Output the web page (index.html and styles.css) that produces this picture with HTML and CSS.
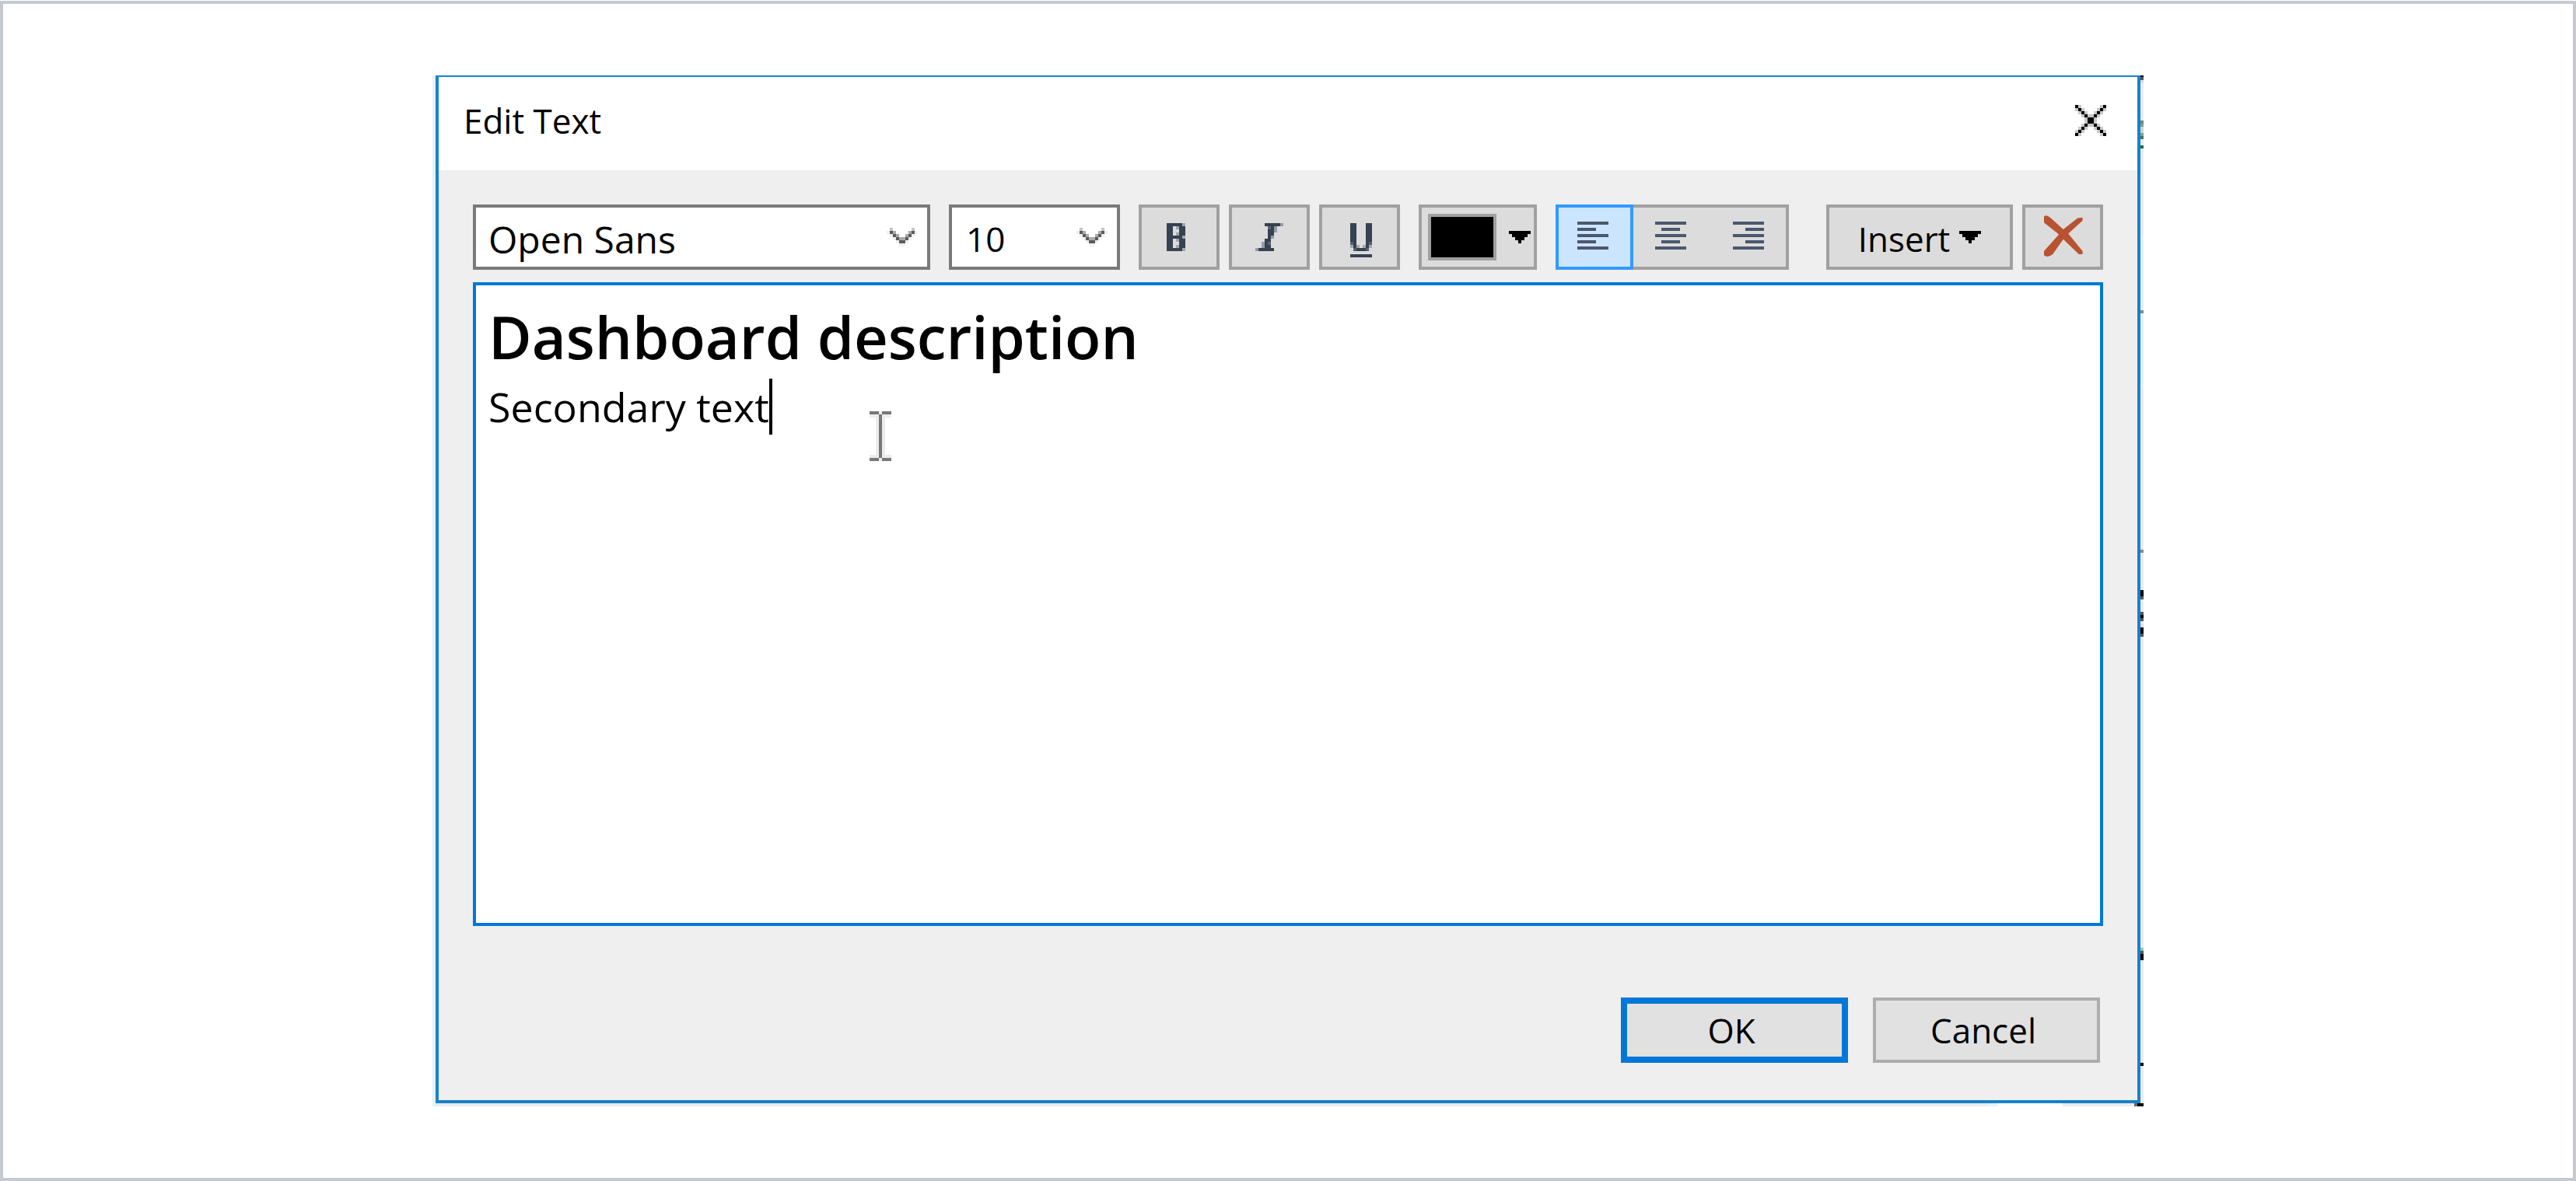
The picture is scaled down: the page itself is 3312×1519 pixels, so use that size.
FILE: index.html
```html
<!DOCTYPE html>
<html lang="en">
<head>
<meta charset="utf-8">
<title>Edit Text</title>
<link rel="stylesheet" href="styles.css">
</head>
<body>
<main class="page">
  <div class="backdrop">
    <section class="dialog" role="dialog" aria-labelledby="dialog-title">
      <header class="titlebar">
        <h1 class="title" id="dialog-title">Edit Text</h1>
        <button class="close" type="button" aria-label="Close">
          <svg width="40" height="40" viewBox="0 0 10 10" shape-rendering="crispEdges">
            <path fill="#c8c8c8" d="M0 0h2v1h-2zM8 0h2v1h-2zM0 1h3v1h-3zM7 1h3v1h-3zM1 2h3v1h-3zM6 2h3v1h-3zM2 3h6v1h-6zM3 4h4v2h-4zM2 6h6v1h-6zM1 7h3v1h-3zM6 7h3v1h-3zM0 8h3v1h-3zM7 8h3v1h-3zM0 9h2v1h-2zM8 9h2v1h-2z"/>
            <path fill="#000" d="M0 0h1v1h-1zM1 1h1v1h-1zM2 2h1v1h-1zM3 3h1v1h-1zM4 4h2v2h-2zM6 6h1v1h-1zM7 7h1v1h-1zM8 8h1v1h-1zM9 9h1v1h-1zM9 0h1v1h-1zM8 1h1v1h-1zM7 2h1v1h-1zM6 3h1v1h-1zM3 6h1v1h-1zM2 7h1v1h-1zM1 8h1v1h-1zM0 9h1v1h-1z"/>
          </svg>
        </button>
      </header>
      <div class="content">
        <div class="toolbar">
          <div class="combo combo-font">
            <select class="combo-select combo-select-font" aria-label="Font"><option>Open Sans</option></select>
            <svg class="chevron" width="40" height="24" viewBox="0 0 10 6" shape-rendering="crispEdges"><use href="#chevron"/></svg>
          </div>
          <div class="combo combo-size">
            <select class="combo-select" aria-label="Font size"><option>10</option></select>
            <svg class="chevron" width="40" height="24" viewBox="0 0 10 6" shape-rendering="crispEdges"><g id="chevron"><path fill="#c6c6c6" d="M1 0h1v1h-1zM8 0h1v1h-1z"/><path fill="#f0f0f0" d="M0 1h1v1h-1zM9 1h1v1h-1zM1 2h1v1h-1zM8 2h1v1h-1zM2 3h1v1h-1zM7 3h1v1h-1zM3 4h1v1h-1zM6 4h1v1h-1zM4 5h2v1h-2z"/><path fill="#a9a9a9" d="M2 1h1v1h-1zM7 1h1v1h-1zM3 2h1v1h-1zM6 2h1v1h-1zM4 3h2v1h-2z"/><path fill="#5c5c5c" d="M1 1h1v1h-1zM8 1h1v1h-1zM2 2h1v1h-1zM7 2h1v1h-1zM3 3h1v1h-1zM6 3h1v1h-1zM4 4h2v1h-2z"/></g></svg>
          </div>
          <div class="group">
            <button class="tool tool-bold" type="button" aria-label="Bold">
              <svg width="24" height="36" viewBox="0 0 6 9" shape-rendering="crispEdges"><path fill="#364151" d="M0 0h5v1h1v3h-1v1h1v3h-1v1h-5zM2 1v3h2v-3zM2 5v3h2v-3z" fill-rule="evenodd"/><path fill="#a2a7ae" d="M3 1h1v1h-1zM5 0h1v1h-1zM3 3h1v1h-1zM3 5h1v1h-1zM3 7h1v1h-1zM5 8h1v1h-1zM5 4h1v1h-1z"/></svg>
            </button>
            <button class="tool" type="button" aria-label="Italic">
              <svg width="36" height="36" viewBox="0 0 9 9" shape-rendering="crispEdges"><path fill="#364151" d="M3 0h5v1h-5zM5 1h1v1h-1zM4 2h2v2h-2zM4 4h1v1h-1zM3 5h2v1h-2zM3 6h1v2h-1zM1 8h5v1h-5z"/><path fill="#5d6673" d="M4 1h1v1h-1zM4 6h1v1h-1z"/><path fill="#364151" d="M5 1h1v2h-1zM4 3h1v2h-1zM3 5h1v3h-1zM4 7h1v1h-1z"/><path fill="#949ba6" d="M8 0h1v1h-1zM6 1h1v2h-1zM5 4h1v1h-1zM2 6h1v2h-1zM0 8h1v1h-1z"/></svg>
            </button>
            <button class="tool tool-underline" type="button" aria-label="Underline">
              <svg width="28" height="44" viewBox="0 0 7 11" shape-rendering="crispEdges"><path fill="#364151" d="M0 0h2v7h1v1h1v-1h1v-7h2v8h-1v1h-5v-1h-1zM0 10h7v1h-7z"/><path fill="#56606e" d="M0 6h1v1h-1zM6 6h1v1h-1zM1 8h1v1h-1zM5 8h1v1h-1z"/><path fill="#a2a7ae" d="M0 7h1v1h-1zM6 7h1v1h-1zM2 7h1v1h-1zM4 7h1v1h-1z"/></svg>
            </button>
          </div>
          <button class="tool tool-color" type="button" aria-label="Text color">
            <span class="swatch"></span>
            <svg width="28" height="16" viewBox="0 0 7 4" shape-rendering="crispEdges"><path d="M0 0h7v1h-1v1h-1v1h-1v1h-1v-1h-1v-1h-1v-1h-1z"/></svg>
          </button>
          <div class="align">
            <button class="align-button align-active" type="button" aria-label="Align left" aria-pressed="true">
              <svg width="40" height="40" viewBox="0 0 10 10" shape-rendering="crispEdges"><path fill="#4a586e" d="M0 0h10v1h-10zM0 2h6v1h-6zM0 4h10v1h-10zM0 6h6v1h-6zM0 8h10v1h-10z"/></svg>
            </button>
            <button class="align-button" type="button" aria-label="Align center">
              <svg width="40" height="40" viewBox="0 0 10 10" shape-rendering="crispEdges"><path fill="#4a586e" d="M0 0h10v1h-10zM2 2h6v1h-6zM0 4h10v1h-10zM2 6h6v1h-6zM0 8h10v1h-10z"/></svg>
            </button>
            <button class="align-button" type="button" aria-label="Align right">
              <svg width="40" height="40" viewBox="0 0 10 10" shape-rendering="crispEdges"><path fill="#4a586e" d="M0 0h10v1h-10zM4 2h6v1h-6zM0 4h10v1h-10zM4 6h6v1h-6zM0 8h10v1h-10z"/></svg>
            </button>
          </div>
          <div class="group group-insert">
            <button class="tool tool-insert" type="button">Insert
              <svg width="28" height="16" viewBox="0 0 7 4" shape-rendering="crispEdges"><path d="M0 0h7v1h-1v1h-1v1h-1v1h-1v-1h-1v-1h-1v-1h-1z"/></svg>
            </button>
            <button class="tool tool-clear" type="button" aria-label="Clear formatting">
              <svg width="56" height="56" viewBox="0 0 14 14"><path fill="#b85232" d="M1 .8Q1.8 .2 3 1.2L7.2 5L11.8 1.4L13.4 1.2V2.2L8.8 6.4L13.4 12V13H12.2L7.2 8.2L3.8 13Q2.4 14.2 1 13.4V12L5.8 6.6L1 2.8z"/></svg>
            </button>
          </div>
        </div>
        <div class="editor" role="textbox" aria-multiline="true" aria-label="Text" contenteditable="true" spellcheck="false">
          <p class="line-large">Dashboard description</p>
          <p class="line-small">Secondary text<span class="caret"></span></p>
          <svg class="pointer" width="28" height="64" viewBox="0 0 7 16" shape-rendering="crispEdges" aria-hidden="true"><path fill="#ececec" d="M0 0h7v2h-2v12h2v2h-7v-2h2v-12h-2z"/><path fill="#787878" d="M0 0h3v1h-3zM4 0h3v1h-3zM3 1h1v14h-1zM0 15h3v1h-3zM4 15h3v1h-3z"/></svg>
        </div>
        <footer class="actions">
          <button class="action action-default" type="button">OK</button>
          <button class="action" type="button">Cancel</button>
        </footer>
      </div>
    </section>
    <svg class="edge" width="4" height="1326" viewBox="0 0 4 1326" shape-rendering="crispEdges" aria-hidden="true">
      <path fill="#e8ebf0" d="M0 0h4v1326h-4z"/>
      <path fill="#e3f3ff" d="M0 206h4v196h-4z"/>
      <path fill="#ddd" d="M0 6h4v4h-4zM0 706h4v4h-4z"/>
      <path fill="#555" d="M0 2h4v4h-4zM0 670h4v4h-4zM0 690h4v4h-4zM0 698h4v4h-4zM0 718h4v4h-4zM0 1126h4v4h-4z"/>
      <path fill="#888" d="M0 302h4v4h-4zM0 610h4v4h-4z"/>
      <path fill="#000" d="M0 0h4v2h-4zM0 662h4v8h-4zM0 694h4v4h-4zM0 710h4v8h-4zM0 1130h4v8h-4zM0 1270h4v4h-4zM0 1322h4v4h-4z"/>
      <path fill="#5b9174" d="M0 58h4v4h-4z"/>
      <path fill="#7ca48e" d="M0 62h4v4h-4zM0 74h4v4h-4z"/>
      <path fill="#c8d6d0" d="M0 66h4v8h-4z"/>
      <path fill="#3c7b58" d="M0 78h4v4h-4z"/>
      <path fill="#1f6c40" d="M0 90h4v4h-4z"/>
      <path fill="#86cdb8" d="M0 1122h4v4h-4z"/>
    </svg>
  </div>
</main>
</body>
</html>
```
FILE: styles.css
```css
* {
  box-sizing: border-box;
}

body {
  margin: 0;
  background: #fff;
  color: #000;
  font-family: "Open Sans", sans-serif;
  font-size: 44px;
  line-height: 60px;
}

button,
select {
  margin: 0;
  padding: 0;
  border: 0;
  border-radius: 0;
  color: inherit;
  font: inherit;
}

svg {
  display: block;
  flex: none;
}

.page {
  min-height: calc(100vh - 1px);
  margin-top: 1px;
  padding: 92px 24px;
  border: 4px solid #c5cad1;
}

.backdrop {
  display: grid;
  grid-template-columns: minmax(0, 1fr) 4px;
  max-width: 2200px;
  margin: 0 auto;
  padding-bottom: 4px;
  border-left: 4px solid #e3f3ff;
  background: linear-gradient(to left, #000 0 8px, #666 8px 12px, #e8ebef 12px 104px, #fff 104px 188px, #e3f3ff 188px 200px, #e8ebef 200px);
}

.edge {
  margin-bottom: -4px;
}

.dialog {
  border: 4px solid #1a80c8;
  border-top-width: 2px;
  background: #efefef;
}

.titlebar {
  display: flex;
  align-items: center;
  justify-content: space-between;
  height: 120px;
  padding: 0 40px 8px 32px;
  background: #fff;
}

.title {
  margin: 0;
  font-size: 44px;
  font-weight: 400;
}

.close {
  background: none;
}

.content {
  padding: 44px 44px 48px;
}

.toolbar {
  display: flex;
  gap: 24px;
  margin-bottom: 16px;
}

.combo {
  display: grid;
  align-items: center;
  height: 84px;
  border: 4px solid #7a7a7a;
  background: #fff;
}

.combo-font {
  flex: 1;
}

.combo-size {
  width: 220px;
}

.combo-select,
.chevron {
  grid-area: 1 / 1;
}

.combo-select {
  width: 100%;
  height: 76px;
  padding: 4px 0 0 18px;
  appearance: none;
  background: none;
}

.combo-select-font {
  padding: 6px 0 0 16px;
  font-size: 48px;
}

.chevron {
  justify-self: end;
  margin-right: 12px;
  pointer-events: none;
}

.group {
  display: flex;
  gap: 12px;
}

.group-insert {
  margin-left: 24px;
}

.tool {
  display: flex;
  align-items: center;
  justify-content: center;
  width: 104px;
  height: 84px;
  border: 4px solid #a0a0a0;
  background: #dcdcdc;
}

.tool-bold {
  padding-right: 8px;
}

.tool-underline {
  padding: 8px 0 0 4px;
}

.tool-color {
  justify-content: space-between;
  width: 152px;
  padding: 0 4px 0 8px;
}

.swatch {
  width: 88px;
  height: 60px;
  border: 4px solid #a0a0a0;
  background: #000;
}

.tool-insert {
  gap: 12px;
  width: 240px;
  padding-top: 4px;
}

.tool-insert svg {
  margin-bottom: 4px;
}

.tool-clear {
  padding-bottom: 4px;
}

.align {
  display: flex;
  height: 84px;
  border: 4px solid #a0a0a0;
  border-left: 0;
  background: #dcdcdc;
}

.align-button {
  display: flex;
  align-items: center;
  justify-content: center;
  width: 100px;
  padding-right: 4px;
  background: none;
}

.align-button:last-child {
  width: 96px;
  padding-right: 0;
}

.align-active {
  height: 84px;
  margin: -4px 0;
  border: 4px solid #3399ff;
  background: #cce5ff;
}

.editor {
  position: relative;
  min-height: 828px;
  padding: 12px 16px;
  border: 4px solid #0078d7;
  background: #fff;
  outline: 0;
}

.line-large,
.line-small {
  margin: 0;
}

.line-large {
  font-size: 76px;
  font-weight: 600;
  line-height: 108px;
}

.line-small {
  display: flex;
  font-size: 52px;
  line-height: 72px;
}

.caret {
  width: 4px;
  height: 72px;
  background: #000;
}

.pointer {
  position: absolute;
  top: 162px;
  left: 506px;
}

.actions {
  display: flex;
  justify-content: flex-end;
  gap: 32px;
  margin-top: 92px;
  padding-right: 4px;
}

.action {
  width: 292px;
  height: 84px;
  padding-right: 8px;
  border: 4px solid #adadad;
  background: #e1e1e1;
}

.action-default {
  border: 8px solid #0078d7;
}
```
